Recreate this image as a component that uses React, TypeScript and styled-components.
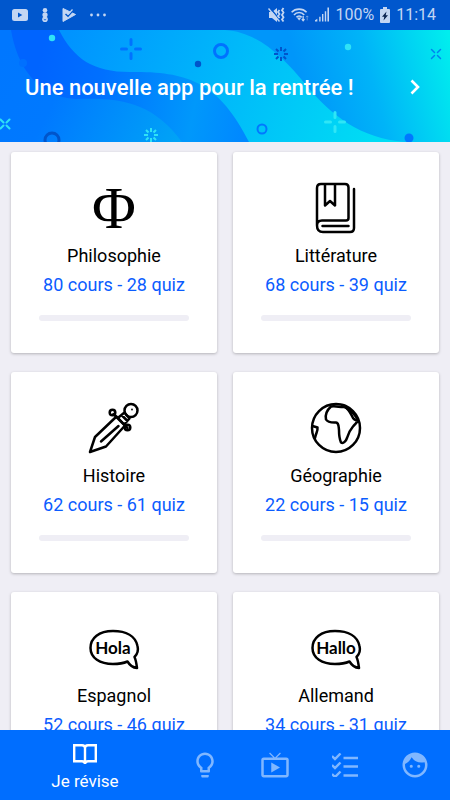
import React from "react";
import styled, { createGlobalStyle } from "styled-components";
import { MdFace, MdLiveTv, MdLightbulbOutline } from "react-icons/md";

const GlobalStyle = createGlobalStyle`
  *, *::before, *::after { box-sizing: border-box; }
  body {
    margin: 0;
    background: #efeef5;
    font-family: Roboto, "Liberation Sans", sans-serif;
  }
`;

const Screen = styled.div`
  display: flex;
  flex-direction: column;
  height: 100vh;
`;

const StatusBar = styled.header`
  display: flex;
  flex: none;
  align-items: center;
  justify-content: space-between;
  height: 30px;
  padding: 0 14px 0 12px;
  background: #0057cd;
  color: #c3d6f3;
`;

const StatusGroup = styled.div<{ $gap: number }>`
  display: flex;
  align-items: center;
  gap: ${(p) => p.$gap}px;
`;

const StatusText = styled.span`
  font-size: 16px;
  line-height: 30px;
`;

const Banner = styled.a`
  position: relative;
  display: flex;
  flex: none;
  align-items: center;
  justify-content: space-between;
  height: 112px;
  padding: 3px 25px 0;
  overflow: hidden;
  background: #0078ff;
  color: #fff;
  text-decoration: none;
`;

const BannerArt = styled.svg`
  position: absolute;
  inset: 0;
  width: 100%;
  height: 100%;
`;

const BannerTitle = styled.span`
  position: relative;
  font-size: 22px;
  font-weight: 500;
  line-height: 28px;
`;

const Chevron = styled.svg`
  position: relative;
`;

const Content = styled.main`
  flex: 1;
  min-height: 0;
  padding: 10px 11px;
  overflow-y: auto;
  scrollbar-width: none;
`;

const SubjectGrid = styled.div`
  display: grid;
  grid-template-columns: 1fr 1fr;
  gap: 19px 16px;
`;

const Card = styled.button`
  display: flex;
  flex-direction: column;
  align-items: center;
  padding: 30px 16px 32px;
  border: 0;
  border-radius: 3px;
  background: #fff;
  box-shadow: 0 1px 3px rgba(0, 0, 0, 0.25);
  font-family: inherit;
  font-size: 18px;
  font-weight: 400;
  line-height: 29px;
`;

const SubjectIcon = styled.svg`
  width: 52px;
  height: 52px;
  margin-bottom: 7px;
  overflow: visible;
  fill: none;
  stroke: #000;
  stroke-width: 2.5;
  stroke-linecap: round;
  stroke-linejoin: round;
`;

const IconText = styled.text<{ $size: number }>`
  fill: #000;
  stroke: none;
  text-anchor: middle;
  font-family: Lato, sans-serif;
  font-size: ${(p) => p.$size}px;
  font-weight: 700;
`;

const PhiText = styled(IconText)`
  font-family: "Liberation Serif", serif;
  font-weight: 400;
`;

const SubjectName = styled.span`
  color: #000;
`;

const SubjectCount = styled.span`
  color: #0b5cff;
`;

const Track = styled.span`
  width: 150px;
  height: 6px;
  margin-top: 16px;
  border-radius: 3px;
  background: #efeef5;
`;

const Nav = styled.nav`
  display: flex;
  flex: none;
  height: 70px;
  background: #006eff;
`;

const NavItem = styled.button<{ $active?: boolean }>`
  display: flex;
  flex: ${(p) => (p.$active ? 17 : 7)} 1 0;
  flex-direction: column;
  align-items: center;
  justify-content: center;
  gap: 4px;
  min-width: 0;
  padding: ${(p) => (p.$active ? 7 : 0)}px 0 0;
  border: 0;
  background: none;
  color: ${(p) => (p.$active ? "#fff" : "#80b7ff")};
  font-family: inherit;
  font-size: 17px;
  line-height: 24px;
`;

function MutedIcon() {
  return (
    <svg width="17" height="16" viewBox="0 0 17 16" fill="currentColor" aria-hidden="true">
      <path d="M1 5h3l5-4v14l-5-4H1z" />
      <path d="M1.500 0.500l11 13" stroke="#0057cd" strokeWidth="1.500" />
      <path d="M0.500 1.500l11 13" stroke="currentColor" strokeWidth="1.400" />
      <path d="M11.500 3l-1.500 2 1.500 2-1.500 2 1.500 2M15.500 1l-1.500 2.300 1.500 2.300-1.500 2.300 1.500 2.300-1.500 2.300 1.500 2" fill="none" stroke="currentColor" strokeWidth="1.800" />
    </svg>
  );
}

function WifiIcon() {
  return (
    <svg width="18" height="16" viewBox="0 0 20 16" fill="none" stroke="currentColor" strokeWidth="1.700" aria-hidden="true">
      <path d="M0.700 5C5 .3 13 .3 17.300 5M3.300 8c3-3.700 8.400-3.700 11.400 0M6 10.500c1.700-1.900 4.300-1.900 6 0" />
      <path d="M6.500 10.800h5L9 14z" fill="currentColor" stroke="none" />
      <path d="M13.500 9v5M12 12.500l1.500 1.800 1.500-1.800" strokeWidth="1.400" />
      <path d="M18 14V9M16.500 10.500L18 9l1.500 1.500" strokeWidth="1" opacity=".5" />
    </svg>
  );
}

function SignalIcon() {
  return (
    <svg width="14" height="16" viewBox="0 0 15 16" fill="currentColor" aria-hidden="true">
      <path d="M0 15v-1.500l2.500-1.500v3zM4.500 15v-5h1.500v5zM7.500 15V7h1.500v8zM10.500 15V4h1.500v11zM13.300 15V0H15v15z" />
    </svg>
  );
}

function BatteryIcon() {
  return (
    <svg width="10" height="16" viewBox="0 0 10 16" fill="currentColor" aria-hidden="true">
      <path d="M3 0h4v2h2q1 0 1 1v12q0 1-1 1H1q-1 0-1-1V3q0-1 1-1h2z" />
      <path d="M6.500 4.500L2 9.700h2.300L3.500 13.500 8 8.300H5.700z" fill="#0a2450" />
    </svg>
  );
}

function VideoIcon() {
  return (
    <svg width="16" height="12" viewBox="0 0 16 12" aria-hidden="true">
      <rect width="16" height="12" rx="2.500" fill="currentColor" />
      <path d="M6 3.500v5L10.300 6z" fill="#0057cd" />
    </svg>
  );
}

function StackIcon() {
  return (
    <svg width="6" height="14" viewBox="0 0 6 14" fill="currentColor" aria-hidden="true">
      <circle cx="3" cy="2.300" r="2.300" />
      <circle cx="3" cy="6.800" r="2.600" />
      <circle cx="3" cy="11.200" r="2.800" />
      <path d="M1.800 11.300l1.200.7 1.200-.7" fill="none" stroke="#0057cd" strokeWidth=".8" />
    </svg>
  );
}

function PlayCheckIcon() {
  return (
    <svg width="14" height="14" viewBox="0 0 14 14" aria-hidden="true">
      <path d="M1 0.500L13.500 6.500L1 13.500z" fill="currentColor" stroke="currentColor" strokeLinejoin="round" />
      <path d="M3.500 6l2.500 2.300L11.500 2" fill="none" stroke="#0057cd" strokeWidth="1.500" />
      <path d="M6 6.500L10.500 1.500" fill="none" stroke="currentColor" strokeWidth="1.200" />
    </svg>
  );
}

function MoreIcon() {
  return (
    <svg width="16" height="4" viewBox="0 0 16 4" fill="currentColor" aria-hidden="true">
      <circle cx="1.500" cy="2" r="1.400" />
      <circle cx="8" cy="2" r="1.400" />
      <circle cx="14.500" cy="2" r="1.400" />
    </svg>
  );
}

const BURST = "M0-7v4M0 7v-4M-7 0h4M7 0h-4M-5-5l2.500 2.500M5 5L2.500 2.500M-5 5l2.500-2.500M5-5L2.500-2.500";
const CROSS = "M0-9.500v5M0 9.500v-5M-9.500 0h5M9.500 0h-5";
const SPARK = "M-4.500-4.500l3 3M4.500 4.500l-3-3M-4.500 4.500l3-3M4.500-4.500l-3 3";

function BannerBackground() {
  return (
    <BannerArt viewBox="0 0 450 112" preserveAspectRatio="xMidYMid slice" fill="none" aria-hidden="true">
      <defs>
        <linearGradient id="low" gradientUnits="userSpaceOnUse" x1="0" y1="20" x2="180" y2="112">
          <stop offset="0" stopColor="#0077ff" />
          <stop offset=".35" stopColor="#0079ff" />
          <stop offset="1" stopColor="#00a4f6" />
        </linearGradient>
        <linearGradient id="deep" gradientUnits="userSpaceOnUse" x1="40" y1="30" x2="250" y2="70">
          <stop offset="0" stopColor="#0064ff" />
          <stop offset=".3" stopColor="#0070ff" />
          <stop offset=".75" stopColor="#0098fb" />
          <stop offset="1" stopColor="#0088ff" />
        </linearGradient>
        <linearGradient id="mid" gradientUnits="userSpaceOnUse" x1="70" y1="0" x2="370" y2="112">
          <stop offset="0" stopColor="#0093ff" />
          <stop offset=".5" stopColor="#00b8fa" />
          <stop offset="1" stopColor="#00dcf4" />
        </linearGradient>
        <linearGradient id="bright" gradientUnits="userSpaceOnUse" x1="300" y1="50" x2="450" y2="10">
          <stop offset="0" stopColor="#0096fa" />
          <stop offset=".45" stopColor="#00b4f8" />
          <stop offset="1" stopColor="#00eeee" />
        </linearGradient>
      </defs>
      <rect width="450" height="112" fill="url(#bright)" />
      <path d="M0 0H225C258 2 283 27 306 55C332 86 360 108 405 112H0z" fill="url(#mid)" />
      <path d="M0 0H59C74 29 93 42 130 42C187 41 219 52 249 112H0z" fill="url(#deep)" />
      <path d="M0 0H11C17 36 37 67 76 69C120 67 153 72 182 112H0z" fill="url(#low)" />
      <circle cx="23" cy="33" r="4" fill="#0070ff" />
      <circle cx="52" cy="8" r="3.200" fill="#2fe2f6" />
      <circle cx="198" cy="34" r="3.200" fill="#0055cb" />
      <circle cx="348" cy="17" r="3.200" fill="#2fe2f6" />
      <circle cx="409" cy="108" r="4.500" fill="#0078ff" />
      <circle cx="221" cy="21" r="6.500" stroke="#0072ff" strokeWidth="3" />
      <circle cx="52" cy="110" r="7" stroke="#0055cb" strokeWidth="3" />
      <circle cx="262" cy="99" r="4.500" stroke="#0078ff" strokeWidth="2" />
      <g strokeLinecap="round">
        <path d={CROSS} transform="translate(131 19)" stroke="#0072ff" strokeWidth="3" />
        <path d={CROSS} transform="translate(335 92)" stroke="#2fe6f6" strokeWidth="3" />
        <path d={SPARK} transform="translate(5 94)" stroke="#2fe2f6" strokeWidth="2" />
        <path d={SPARK} transform="translate(436 24)" stroke="#0082f0" strokeWidth="1.500" />
      </g>
      <path d={BURST} transform="translate(151 105)" stroke="#2fe2f6" strokeWidth="2" />
      <path d={BURST} transform="translate(281 24)" stroke="#0055cb" strokeWidth="2" />
    </BannerArt>
  );
}

const BUBBLE = "M25 9C11 9 2.500 16 2.500 26C2.500 36 12 42 25 42C31 42 36 41 39.500 39.500C41 42 44.500 45.500 49 46C48.500 42 48 38 46.500 35C49.500 32 50.500 28 49.500 24C47.500 14 38 9 25 9z";

const ICONS: Record<string, React.ReactNode> = {
  phi: <PhiText $size={60} x="26" y="46">Φ</PhiText>,
  book: (
    <path d="M7 43V6q0-4 4-4H35q3.500 0 3.500 3.500V36q0 2.500-2.500 2.500H12q-5 0-5 5 0 6.500 6 6.500H40q4 0 4-4V7M12.500 44H38.500M15 2V23.500L20 19l5 4.500V2" />
  ),
  dagger: (
    <>
      <path d="M2 50L7 35 28.500 14.500 37 23.500 18 44.500zM13 39.500L30.500 24" />
      <path d="M25.500 12L39.500 26M31 15l5.500-4.500 5 6-4.500 5M33.500 13l6 6" />
      <circle cx="24.500" cy="10.500" r="2.800" />
      <circle cx="39.500" cy="25.500" r="2.800" />
      <circle cx="43" cy="8.500" r="6.500" />
      <circle cx="44" cy="7.500" r="0.900" fill="#000" stroke="none" />
    </>
  ),
  globe: (
    <>
      <circle cx="26" cy="26" r="24" />
      <path d="M21 4.500C16 9 15 13 16 17.500C18 21 23 20.500 26 20.500C29 21 28.500 24 29 28C29 33 29.500 37 31 40.500C33.500 42 36 39 37 36C38 32 40 28 43 24.500C45 22 47.500 20 48 18.500C45 18.500 43 16.500 42 14C40 10 38 6 34.500 5C30 5.500 26 3.500 21 4.500z" />
      <path d="M33 3C38 8 45 10 47.500 18M2.500 24L7.500 25.500C8 29 6 31 5 36" />
    </>
  ),
  hola: (
    <>
      <path d={BUBBLE} />
      <IconText $size={17} x="25" y="32">Hola</IconText>
    </>
  ),
  hallo: (
    <>
      <path d={BUBBLE} />
      <IconText $size={17} x="26" y="32">Hallo</IconText>
    </>
  ),
};

const SUBJECTS = [
  { name: "Philosophie", lessons: 80, quizzes: 28, icon: "phi" },
  { name: "Littérature", lessons: 68, quizzes: 39, icon: "book" },
  { name: "Histoire", lessons: 62, quizzes: 61, icon: "dagger" },
  { name: "Géographie", lessons: 22, quizzes: 15, icon: "globe" },
  { name: "Espagnol", lessons: 52, quizzes: 46, icon: "hola" },
  { name: "Allemand", lessons: 34, quizzes: 31, icon: "hallo" },
];

export default function App() {
  return (
    <Screen>
      <GlobalStyle />
      <StatusBar>
        <StatusGroup $gap={14}>
          <VideoIcon />
          <StackIcon />
          <PlayCheckIcon />
          <MoreIcon />
        </StatusGroup>
        <StatusGroup $gap={6}>
          <MutedIcon />
          <WifiIcon />
          <SignalIcon />
          <StatusText>100%</StatusText>
          <BatteryIcon />
          <StatusText>11:14</StatusText>
        </StatusGroup>
      </StatusBar>
      <Banner href="#rentree">
        <BannerBackground />
        <BannerTitle>Une nouvelle app pour la rentrée !</BannerTitle>
        <Chevron width="20" height="20" viewBox="0 0 20 20" fill="none" stroke="#fff" strokeWidth="2.600" aria-hidden="true">
          <path d="M6.500 2.500L13 9l-6.500 6.500" />
        </Chevron>
      </Banner>
      <Content>
        <SubjectGrid>
          {SUBJECTS.map((s) => (
            <Card key={s.name} type="button">
              <SubjectIcon viewBox="0 0 52 52" aria-hidden="true">{ICONS[s.icon]}</SubjectIcon>
              <SubjectName>{s.name}</SubjectName>
              <SubjectCount>{`${s.lessons} cours - ${s.quizzes} quiz`}</SubjectCount>
              <Track />
            </Card>
          ))}
        </SubjectGrid>
      </Content>
      <Nav>
        <NavItem type="button" $active aria-current="page">
          <svg width="24" height="21" viewBox="0 0 24 21" fill="none" stroke="currentColor" strokeWidth="2.400" aria-hidden="true">
            <path d="M1.200 1.200H9Q12 1.200 12 4Q12 1.200 15 1.200H22.800V17.300H15Q12 17.300 12 20Q12 17.300 9 17.300H1.200zM12 4V19" />
          </svg>
          Je révise
        </NavItem>
        <NavItem type="button" aria-label="Conseils">
          <MdLightbulbOutline size={30} />
        </NavItem>
        <NavItem type="button" aria-label="Vidéos">
          <MdLiveTv size={30} />
        </NavItem>
        <NavItem type="button" aria-label="Quiz">
          <svg width="26" height="24" viewBox="1 1 26 24" fill="none" stroke="currentColor" strokeWidth="2.400" aria-hidden="true">
            <path d="M1 4l3 3 5.500-5.500M1 13l3 3 5.500-5.500M1 22l3 3 5.500-5.500M12.500 6H28M12.500 14.500H28M12.500 23.500H28" />
          </svg>
        </NavItem>
        <NavItem type="button" aria-label="Profil">
          <MdFace size={30} />
        </NavItem>
      </Nav>
    </Screen>
  );
}
